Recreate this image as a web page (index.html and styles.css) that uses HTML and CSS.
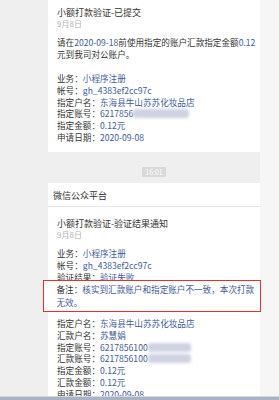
FILE: index.html
```html
<!DOCTYPE html>
<html lang="zh-CN">
<head>
    <meta charset="UTF-8">
    <title>小额打款验证</title>
    <link rel="stylesheet" href="styles.css">
</head>
<body>
    <div class="screen">
        <div class="chat">
            <div class="card">
                <div class="msg first">
                    <div class="title">小额打款验证-已提交</div>
                    <div class="date">9月8日</div>
                    <p class="text">请在<span class="val">2020-09-18</span>前使用指定的账户汇款指定金额<span class="val">0.12</span><br>元到我司对公账户。</p>
                    <ul class="fields">
                        <li>业务：<span class="val">小程序注册</span></li>
                        <li>帐号：<span class="val">gh_4383ef2cc97c</span></li>
                        <li>指定户名：<span class="val">东海县牛山苏苏化妆品店</span></li>
                        <li>指定账号：<span class="val">6217856</span><span class="masked wide"></span></li>
                        <li>指定金额：<span class="val">0.12元</span></li>
                        <li>申请日期：<span class="val">2020-09-08</span></li>
                    </ul>
                </div>
            </div>

            <div class="time"><span>16:01</span></div>

            <div class="card">
                <div class="card-head">微信公众平台</div>
                <div class="msg">
                    <div class="title">小额打款验证-验证结果通知</div>
                    <div class="date">9月8日</div>
                    <ul class="fields top">
                        <li>业务：<span class="val">小程序注册</span></li>
                        <li>帐号：<span class="val">gh_4383ef2cc97c</span></li>
                        <li>验证结果：<span class="val">验证失败</span></li>
                    </ul>
                    <div class="note">备注：<span class="val">核实到汇款账户和指定账户不一致，本次打款<br>无效。</span></div>
                    <ul class="fields">
                        <li>指定户名：<span class="val">东海县牛山苏苏化妆品店</span></li>
                        <li>汇款户名：<span class="val">苏慧娟</span></li>
                        <li>指定账号：<span class="val">6217856100</span><span class="masked"></span></li>
                        <li>汇款账号：<span class="val">6217856100</span><span class="masked"></span></li>
                        <li>指定金额：<span class="val">0.12元</span></li>
                        <li>汇款金额：<span class="val">0.12元</span></li>
                        <li>申请日期：<span class="val">2020-09-08</span></li>
                    </ul>
                </div>
            </div>
        </div>
        <div class="side"></div>
    </div>
    <div class="bottom-bar"></div>
</body>
</html>
```

FILE: styles.css
```css
html, body {
    margin: 0;
    padding: 0;
}
body {
    height: 400px;
    overflow: hidden;
    display: flex;
    flex-direction: column;
    font-family: "Noto Sans CJK SC", "Noto Sans", sans-serif;
    font-size: 8.6px;
    color: #353535;
    background-color: #efefef;
}
.screen {
    flex: 1;
    min-height: 0;
    display: flex;
    overflow: hidden;
}
.chat {
    width: 260px;
    padding-left: 48px;
    box-sizing: border-box;
    background-color: #efefef;
}
.side {
    flex: 1;
    background-color: #f6f6f6;
}
.card {
    background: #ffffff;
}
.card-head {
    font-size: 9px;
    line-height: 12px;
    padding: 6.5px 9px 4.5px 5px;
    border-bottom: 1px solid #e7e7e7;
    color: #333;
}
.msg {
    padding: 11.2px 9px 8px 9px;
}
.msg.first {
    padding-top: 7px;
}
.title {
    font-size: 9px;
    line-height: 11px;
    color: #333;
    white-space: nowrap;
}
.date {
    font-size: 8px;
    line-height: 12px;
    color: #b2b2b2;
}
.text {
    margin: 7px 0 0 0;
    line-height: 11.5px;
    white-space: nowrap;
}
.val {
    color: #3e5c9a;
}
.fields {
    list-style: none;
    margin: 13px 0 0 0;
    padding: 0;
    line-height: 11.8px;
    white-space: nowrap;
}
.fields.top {
    margin-top: 6.6px;
}
.note + .fields {
    margin-top: 6px;
}
.masked {
    display: inline-block;
    width: 43px;
    height: 9px;
    vertical-align: -1px;
    background-color: #cfd3e1;
    border-radius: 3px;
    filter: blur(1.5px);
}
.masked.wide {
    width: 56px;
}
.note {
    position: relative;
    margin: -3.5px -10px 0 -14px;
    padding: 2.5px 0 2.5px 12.5px;
    border: 1.5px solid #e8302a;
    background: #ffffff;
    line-height: 12.5px;
    white-space: nowrap;
}
.time {
    display: flex;
    justify-content: center;
    margin: 15px 0 6px 0;
}
.time span {
    background-color: #d9d9d9;
    color: #ffffff;
    font-size: 7px;
    line-height: 10.5px;
    padding: 0 3px;
    border-radius: 1px;
}
.bottom-bar {
    height: 3px;
    background-color: #a9b3c3;
    border-top: 1px solid #d3d8e0;
}
```
